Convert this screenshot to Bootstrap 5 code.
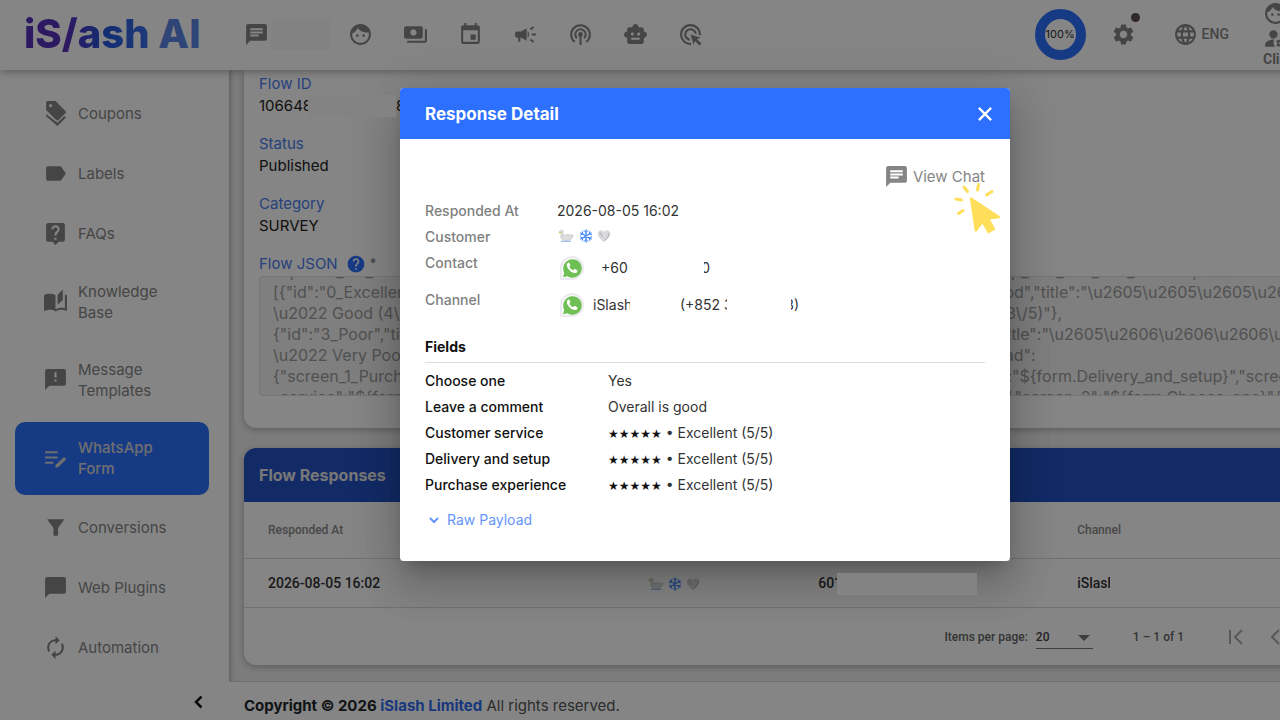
<!DOCTYPE html>
<html lang="en">
<head>
<meta charset="utf-8">
<meta name="viewport" content="width=device-width, initial-scale=1">
<title>iSlash AI - WhatsApp Form</title>
<link href="https://cdn.jsdelivr.net/npm/bootstrap@5.3.0/dist/css/bootstrap.min.css" rel="stylesheet">
<style>
  :root { --brand: #2d70ff; --icon: #858585; --page: #ededed; }
  html, body { height: 100%; }
  body { font-family: Inter, "Liberation Sans", sans-serif; font-size: 15px; line-height: 21px; color: #222; overflow: hidden; }
  svg { display: block; flex: none; }
  a { text-decoration: none; }
  .ico { width: 25px; height: 25px; fill: currentColor; }
  /* the workspace is wider than the window; the surplus is clipped */
  .shell { width: calc(100% + 130px); min-height: 100vh; position: relative; background: var(--page); overflow: hidden; }
  .topbar { height: 70px; background: #fff; color: var(--icon); box-shadow: 0 2px 8px rgba(0,0,0,.3); z-index: 2; padding: 0 0 2px 24px; }
  .logo { font: 800 40px/1 Inter, sans-serif; white-space: nowrap; width: 220px; }
  .logo .word { background: linear-gradient(90deg, #5630bd 0 35%, #2458dc 65%, #3d6fe8); -webkit-background-clip: text; background-clip: text; color: transparent; }
  .logo .ai { color: #5a84e4; }
  .topnav a { width: 55px; display: flex; justify-content: center; color: inherit; }
  .topnav a:first-child { width: 24px; }
  .patch { background: #fafafa; height: 31px; width: 60px; margin: 0 2px 0 3px; }
  .gauge { width: 51px; height: 51px; border-radius: 50%; border: 10px solid var(--brand); font-size: 11px; color: #333; }
  .gear { position: relative; margin: 0 37px 0 25px; }
  .gear .dot { position: absolute; width: 9px; height: 9px; border-radius: 50%; background: #5b4f4f; left: 20px; top: -9px; }
  .lang { font: 500 14px/16px Roboto, sans-serif; color: var(--icon); }
  .account { width: 147px; margin-left: 34px; }
  .account b { font-weight: 700; }
  .side { width: 229px; background: #fff; box-shadow: 1px 0 5px rgba(0,0,0,.3); padding: 16px 20px 8px 15px; }
  .side a { display: flex; align-items: center; min-height: 55px; margin-bottom: 5px; padding: 15px 28px; gap: 10px; color: var(--icon); border-radius: 10px; }
  .side a.two { min-height: 73px; padding: 14px 20px 16px 28px; }
  .side a.active { background: var(--brand); color: #d5d5d5; font-weight: 500; }
  .panel { background: #fff; box-shadow: 0 2px 6px rgba(0,0,0,.25); margin: 0 15px; }
  .info { border-radius: 0 0 12px 12px; padding: 3px 15px 32px; }
  .info .name { color: #4b7dee; }
  .info label.name { margin-bottom: 2px; }
  .info dl > div { height: 60px; }
  .info dt { line-height: 21px; margin: 0 0 1px; }
  .info dd { line-height: 21px; margin: 0; }
  .clip { display: inline-block; overflow: hidden; vertical-align: top; white-space: nowrap; }
  .clip.tail { display: inline-flex; justify-content: flex-end; }
  .mask { position: relative; z-index: 10; flex: none; height: 22px; background: #838383; }
  .json { background: #f3f3f3; border: 1px solid #e0e0e0; border-radius: 4px; color: #9c9c9c; height: 120px; font-size: 16px; line-height: 21px; padding: 0 13px; resize: none; overflow: hidden; white-space: pre; display: block; width: 100%; }
  .resp { border-radius: 12px; margin-top: 20px; overflow: hidden; }
  .resp h2 { background: #2453c6; color: #e4e4e4; font-size: 16px; line-height: 54px; padding-left: 15px; font-weight: 700; margin: 0; }
  .resp table { font-family: Roboto, sans-serif; table-layout: fixed; width: 100%; border-collapse: collapse; }
  .resp th { font-size: 12px; font-weight: 500; color: #8a8a8a; height: 56px; }
  .resp td { font-size: 14px; font-weight: 500; height: 49px; color: #333; }
  .resp th, .resp td { padding: 2px 0 0 24px; border-bottom: 1px solid #d8d8d8; }
  .pager { font: 500 12px/20px Roboto, sans-serif; color: #666; height: 57px; padding: 2px 19px 0 0; }
  .pager select { appearance: none; border: 0; border-bottom: 1px solid #777; background: transparent; font: 500 12px/22px Roboto, sans-serif; color: #444; width: 57px; padding: 0; }
  .pager .caret { position: absolute; right: 3px; top: 9px; border: 6px solid transparent; border-top-color: #777; border-bottom: 0; }
  .pager button { width: 40px; height: 40px; border: 0; background: none; padding: 0; color: #aaa; display: flex; align-items: center; justify-content: center; }
  .foot { background: #fff; border-top: 1px solid #d5d5d5; margin-top: 16px; padding: 13px 15px; color: #555; }
  .veil { position: absolute; inset: 0; background: rgba(0,0,0,.48); z-index: 9; }
  .overlay { position: absolute; z-index: 11; display: block; height: auto; overflow: visible; pointer-events: none; }
  .overlay .modal-dialog { max-width: 610px; margin: 88px auto 0; }
  .overlay .modal-content { border: 0; border-radius: 4px; font-size: 14px; line-height: 20px; color: #333; }
  .lift { position: absolute; z-index: 9; left: 0; right: 0; top: 88px; max-width: 610px; height: 473px; margin: 0 auto; box-shadow: 0 11px 15px -7px rgba(0,0,0,.2), 0 24px 38px 3px rgba(0,0,0,.14), 0 9px 46px 8px rgba(0,0,0,.12); }
  .overlay .modal-header { background: var(--brand); color: #fff; border: 0; height: 51px; padding: 1px 13px 0 25px; border-radius: 4px 4px 0 0; }
  .overlay h1 { font-size: 17px; font-weight: 700; margin: 0; }
  .overlay .modal-header button { border: 0; background: none; padding: 5px; color: #fff; }
  .overlay .modal-body { padding: 25px 25px 31px; }
  .chat { color: #858585; font-size: 15px; gap: 4px; }
  .click { position: absolute; left: 554px; top: 94px; }
  .meta { margin: 12px 0 0; }
  .meta dt { width: 132px; font-weight: 500; color: #808080; }
  .meta dt, .meta dd, .fields dt, .fields dd { margin: 0; }
  .meta > div { min-height: 26px; display: flex; }
  .meta > .tall { height: 37px; }
  .tall dd { display: flex; align-items: center; height: 30px; }
  .tall dd > svg { margin-left: 2px; }
  .overlay h3 { font-size: 14px; font-weight: 700; line-height: 20px; margin: 10px 0 5px; color: #111; }
  .fields { border-top: 1px solid #ddd; padding-top: 5px; margin: 0; }
  .fields > div { display: flex; height: 26px; align-items: center; }
  .fields dt { width: 183px; font-weight: 500; color: #111; }
  .fields .stars { font: 12px/20px "DejaVu Sans", sans-serif; color: #111; }
  .raw { border: 0; background: none; color: #6595fb; padding: 0 3px; margin-top: 12px; gap: 7px; }
</style>
</head>
<body>
<svg width="0" height="0" class="position-absolute" aria-hidden="true">
  <symbol id="chat" viewBox="0 0 24 24"><path d="M20 2H4c-1.1 0-1.99.9-1.99 2L2 22l4-4h14c1.1 0 2-.9 2-2V4c0-1.1-.9-2-2-2zM6 9h12v2H6V9zm8 5H6v-2h8v2zm4-6H6V6h12v2z"/></symbol>
  <symbol id="face" viewBox="0 0 24 24"><path d="M9 11.75c-.69 0-1.25.56-1.25 1.25s.56 1.25 1.25 1.25 1.25-.56 1.25-1.25-.56-1.25-1.25-1.25zm6 0c-.69 0-1.25.56-1.25 1.25s.56 1.25 1.25 1.25 1.25-.56 1.25-1.25-.56-1.25-1.25-1.25zM12 2C6.48 2 2 6.48 2 12s4.48 10 10 10 10-4.48 10-10S17.52 2 12 2zm0 18c-4.41 0-8-3.59-8-8 0-.29.02-.58.05-.86 2.36-1.05 4.23-2.98 5.21-5.37C11.07 8.33 14.05 10 17.42 10c.78 0 1.53-.09 2.25-.26.21.71.33 1.47.33 2.26 0 4.41-3.59 8-8 8z"/></symbol>
  <symbol id="snow" viewBox="0 0 14 14"><g fill="none" stroke="#4a8cf5" stroke-width="1.4" stroke-linecap="round"><path d="M7 1v12M1.8 4l10.4 6M12.2 4L1.8 10"/><path stroke-width="1" d="M5 1.6l2 2 2-2M5 12.4l2-2 2 2M1.3 6l2.6-.8-.6-2.7M12.7 6l-2.6-.8.6-2.7M1.3 8l2.6.8-.6 2.7M12.7 8l-2.6.8.6 2.7"/></g></symbol>
  <symbol id="swan" viewBox="0 0 16 14"><path d="M3.2 1.2c1.700 0 2.400 1.100 2 2.600L4.600 6.500c2 0 3.400-.9 5.200-.9 2 .1 3.700 1 5.200.2-.2 3.500-2.600 5.700-6.200 5.700-3.600 0-6.200-1.200-6-4.400.1-1.500.7-2.400.6-3.300L1.300 3.500C1.200 2.200 2 1.200 3.200 1.200z" fill="#dedede" stroke="#b9b9b9" stroke-width=".6"/><path d="M.4 4.300L2.400 2.700l.6 1.200z" fill="#e8b52f"/><path d="M3 12.300h10" stroke="#9fc3ee" stroke-width="1.400"/></symbol>
  <symbol id="heart" viewBox="0 0 14 14"><path d="M7 13C3 10 .8 7.600.8 4.700.8 2.700 2.200 1.300 4 1.300c1.300 0 2.400.7 3 1.800.6-1.100 1.700-1.800 3-1.800 1.800 0 3.200 1.400 3.200 3.400C13.200 7.600 11 10 7 13z" fill="#d9d9dc"/><path d="M7.500 11.500c3-2.400 5-4.600 4.700-7.500M3 3.500L5.500 8" stroke="#a9a9ae" fill="none" stroke-width=".9"/></symbol>
  <symbol id="wa" viewBox="0 0 28 28"><path d="M1 27V13A13 13 0 1 1 14 27z" fill="#ececf0"/><path d="M3.500 24.500V14A10.500 10.500 0 1 1 14 24.500z" fill="#fff"/><path d="M4.500 24l1-5.200A10 10 0 1 1 9 22.800z" fill="#6fc054"/><path d="M10.300 8c-.6 0-1.900.9-1.900 2.800 0 3.500 5 8.700 8.600 8.700 1.800 0 2.900-1 2.900-2.400 0-.4-.1-.6-.4-.8l-2.300-1.200c-.5-.2-.8-.1-1.100.3l-.8 1c-1.900-.7-3.300-2.100-4.100-3.800l.8-1c.3-.3.3-.6.2-.9l-1-2.200c-.2-.4-.5-.5-.9-.5z" fill="#fff"/></symbol>
</svg>

<div class="shell d-flex flex-column">
  <header class="topbar d-flex align-items-center flex-shrink-0">
    <a href="#" class="logo"><span class="word">iS/ash</span> <span class="ai">AI</span></a>
    <nav class="topnav d-flex align-items-center" aria-label="Tools">
      <a href="#" aria-label="Chat"><svg class="ico"><use href="#chat"/></svg></a>
      <span class="patch"></span>
      <a href="#" aria-label="Customers"><svg class="ico"><use href="#face"/></svg></a>
      <a href="#" aria-label="Payments"><svg class="ico" viewBox="0 0 24 24"><path d="M19 14V6c0-1.1-.9-2-2-2H3c-1.1 0-2 .9-2 2v8c0 1.1.9 2 2 2h14c1.1 0 2-.9 2-2zm-9-1c-1.66 0-3-1.340-3-3s1.340-3 3-3 3 1.340 3 3-1.340 3-3 3zm13-6v11c0 1.100-.9 2-2 2H4v-2h17V7h2z"/></svg></a>
      <a href="#" aria-label="Bookings"><svg class="ico" viewBox="0 0 24 24"><path d="M17 12h-5v5h5v-5zM16 1v2H8V1H6v2H5c-1.110 0-1.990.9-1.990 2L3 19c0 1.100.89 2 2 2h14c1.100 0 2-.9 2-2V5c0-1.100-.9-2-2-2h-1V1h-2zm3 18H5V8h14v11z"/></svg></a>
      <a href="#" aria-label="Campaigns"><svg class="ico" viewBox="0 0 24 24"><path d="M18 11v2h4v-2h-4zm-2 6.610c.96.71 2.210 1.650 3.200 2.390.4-.53.8-1.070 1.200-1.600-.99-.74-2.240-1.680-3.200-2.400-.4.54-.8 1.080-1.200 1.610zM20.400 5.600c-.4-.53-.8-1.070-1.200-1.600-.99.74-2.240 1.680-3.200 2.400.4.53.8 1.070 1.200 1.600.96-.72 2.210-1.650 3.200-2.400zM4 9c-1.100 0-2 .9-2 2v2c0 1.100.9 2 2 2h1v4h2v-4h1l5 3V6L8 9H4zm11.500 3c0-1.330-.58-2.530-1.500-3.350v6.690c.92-.81 1.500-2.010 1.500-3.340z"/></svg></a>
      <a href="#" aria-label="Broadcast"><svg class="ico" viewBox="0 0 24 24"><g fill="none" stroke="currentColor" stroke-width="2"><path d="M6.500 19.200A9 9 0 1 1 17.500 19.200M8.500 15.600A5 5 0 1 1 15.500 15.600"/><path d="M12 12v10"/></g><circle cx="12" cy="12" r="2.300"/></svg></a>
      <a href="#" aria-label="Bot"><svg class="ico" viewBox="0 0 24 24"><path d="M20 9V7c0-1.100-.9-2-2-2h-3c0-1.660-1.340-3-3-3S9 3.340 9 5H6c-1.100 0-2 .9-2 2v2c-1.660 0-3 1.340-3 3s1.340 3 3 3v4c0 1.100.9 2 2 2h12c1.100 0 2-.9 2-2v-4c1.660 0 3-1.340 3-3s-1.340-3-3-3zM7.500 11.500c0-.83.67-1.500 1.500-1.500s1.500.67 1.500 1.500S9.830 13 9 13s-1.500-.67-1.500-1.500zM16 17H8v-2h8v2zm-1-4c-.83 0-1.500-.67-1.500-1.500S14.170 10 15 10s1.500.67 1.500 1.500S15.830 13 15 13z"/></svg></a>
      <a href="#" aria-label="Ads"><svg class="ico" viewBox="0 0 24 24"><path d="M11.710 17.990C8.530 17.840 6 15.220 6 12c0-3.310 2.690-6 6-6 3.220 0 5.840 2.530 5.990 5.710l-2.100-.63C15.480 9.310 13.890 8 12 8c-2.210 0-4 1.790-4 4 0 1.890 1.310 3.480 3.080 3.890l.63 2.100zM22 12c0 .3-.01.6-.04.9l-1.970-.59c.01-.1.01-.21.01-.31 0-4.420-3.580-8-8-8s-8 3.580-8 8 3.580 8 8 8c.1 0 .21 0 .31-.01l.59 1.970c-.3.03-.6.04-.9.04-5.520 0-10-4.480-10-10S6.480 2 12 2s10 4.480 10 10zm-3.770 4.260L22 15l-10-3 3 10 1.260-3.770 4.270 4.270 1.980-1.980-4.280-4.260z"/></svg></a>
    </nav>
    <div class="ms-auto d-flex align-items-center">
      <div class="gauge d-flex align-items-center justify-content-center">100%</div>
      <a href="#" class="gear text-reset" aria-label="Settings"><svg class="ico" viewBox="0 0 24 24"><path d="M19.140 12.940c.04-.3.06-.61.06-.94 0-.32-.02-.64-.07-.94l2.030-1.580c.18-.14.23-.41.12-.61l-1.920-3.320c-.12-.22-.37-.29-.59-.22l-2.390.96c-.5-.38-1.030-.7-1.620-.94l-.36-2.540c-.04-.24-.24-.41-.48-.41h-3.840c-.24 0-.43.17-.47.41l-.36 2.540c-.59.24-1.130.57-1.620.94l-2.390-.96c-.22-.08-.47 0-.59.22L2.740 8.870c-.12.21-.08.47.12.61l2.030 1.580c-.05.3-.09.63-.09.94s.02.64.07.94l-2.030 1.580c-.18.14-.23.41-.12.61l1.920 3.320c.12.22.37.29.59.22l2.390-.96c.5.38 1.030.7 1.620.94l.36 2.540c.05.24.24.41.48.41h3.840c.24 0 .44-.17.47-.41l.36-2.540c.59-.24 1.130-.56 1.620-.94l2.390.96c.22.08.47 0 .59-.22l1.920-3.320c.12-.22.07-.47-.12-.61l-2.010-1.580zM12 15.600c-1.980 0-3.600-1.620-3.600-3.600s1.620-3.600 3.600-3.600 3.600 1.620 3.600 3.600-1.620 3.600-3.600 3.600z"/></svg><span class="dot"></span></a>
      <a href="#" class="lang d-flex align-items-center gap-1"><svg class="ico" viewBox="0 0 24 24"><path d="M11.990 2C6.470 2 2 6.480 2 12s4.470 10 9.990 10C17.520 22 22 17.520 22 12S17.520 2 11.990 2zm6.930 6h-2.950c-.32-1.250-.78-2.450-1.380-3.560 1.840.63 3.370 1.910 4.330 3.560zM12 4.040c.83 1.200 1.480 2.530 1.910 3.960h-3.820c.43-1.430 1.080-2.760 1.910-3.960zM4.260 14C4.100 13.360 4 12.690 4 12s.1-1.360.26-2h3.380c-.08.66-.14 1.320-.14 2 0 .68.06 1.340.14 2H4.260zm.82 2h2.950c.32 1.250.78 2.450 1.380 3.560-1.840-.63-3.370-1.900-4.330-3.560zm2.950-8H5.080c.96-1.660 2.490-2.930 4.330-3.560C8.810 5.550 8.350 6.750 8.030 8zM12 19.960c-.83-1.200-1.480-2.530-1.910-3.960h3.820c-.43 1.430-1.080 2.760-1.910 3.960zM14.340 14H9.660c-.09-.66-.16-1.320-.16-2 0-.68.07-1.350.16-2h4.680c.09.65.16 1.320.16 2 0 .68-.07 1.340-.16 2zm.25 5.560c.6-1.110 1.060-2.310 1.380-3.560h2.950c-.96 1.650-2.490 2.930-4.330 3.560zM16.360 14c.08-.66.14-1.320.14-2 0-.68-.06-1.340-.14-2h3.380c.16.64.26 1.310.26 2s-.1 1.360-.26 2h-3.380z"/></svg>ENG</a>
      <a href="#" class="lang account"><svg class="ico" aria-hidden="true"><use href="#face"/></svg><svg class="ico" viewBox="0 0 24 24"><circle cx="10" cy="8" r="4"/><path d="M10.670 13.020C7.400 12.800 2 14.300 2 18v2h9.500a7 7 0 0 1-.83-6.980z"/><path d="M20.750 16l1.140-1-.94-1.700-1.460.5-.9-.5-.3-1.500h-1.900l-.3 1.500-.9.500-1.460-.5-.94 1.700 1.140 1v1l-1.140 1 .94 1.700 1.460-.5.900.5.300 1.500h1.900l.3-1.500.9-.5 1.460.5.94-1.700-1.140-1zm-3.400 2.300a1.800 1.800 0 1 1 0-3.600 1.800 1.800 0 0 1 0 3.600z"/></svg><b>Client</b></a>
    </div>
  </header>

  <div class="d-flex flex-grow-1">
    <aside class="side d-flex flex-column flex-shrink-0">
      <a href="#"><svg class="ico" viewBox="0 0 24 24"><path fill-rule="evenodd" d="M4.500 0H12l9.500 9.500c.7.7.7 1.500 0 2.200l-6.600 6.600c-.7.7-1.500.7-2.200 0L3 8.700V1.500C3 .7 3.700 0 4.500 0zM7.300 2.900a1.500 1.500 0 1 0 0 3 1.500 1.500 0 0 0 0-3z"/><path d="M3 12.400V14.600L13.800 24l8.200-8.200-1.500-1.500-6.700 6.600z"/></svg>Coupons</a>
      <a href="#"><svg class="ico" viewBox="0 0 24 24"><path d="M17.630 5.840C17.270 5.330 16.670 5 16 5L5 5.010C3.900 5.010 3 5.900 3 7v10c0 1.100.9 1.990 2 1.990L16 19c.67 0 1.270-.33 1.630-.84L22 12l-4.370-6.160z"/></svg>Labels</a>
      <a href="#"><svg class="ico" viewBox="0 0 24 24"><path d="M19 2H5c-1.110 0-2 .9-2 2v14c0 1.100.89 2 2 2h4l3 3 3-3h4c1.100 0 2-.9 2-2V4c0-1.100-.9-2-2-2zm-6 16h-2v-2h2v2zm2.070-7.750l-.9.920C13.450 11.900 13 12.500 13 14h-2v-.5c0-1.100.45-2.100 1.170-2.830l1.240-1.260c.37-.36.59-.86.59-1.410 0-1.100-.9-2-2-2s-2 .9-2 2H8c0-2.210 1.790-4 4-4s4 1.790 4 4c0 .88-.36 1.680-.93 2.250z"/></svg>FAQs</a>
      <a href="#" class="two"><svg class="ico" viewBox="0 0 24 24"><path d="M19 .5l-5 5V15l5-4.500v-10zM1 6v14.650c0 .25.25.5.5.5.100 0 .15-.05.25-.05C3.100 20.450 5.050 20 6.500 20c1.950 0 4.050.4 5.500 1.500V6c-1.450-1.100-3.550-1.500-5.500-1.500S2.450 4.900 1 6zm22 13.500V6c-.6-.45-1.250-.75-2-1v13.500c-1.100-.35-2.300-.5-3.500-.5-1.700 0-4.150.65-5.500 1.500v2c1.350-.85 3.800-1.500 5.500-1.500 1.650 0 3.350.3 4.750 1.050.1.050.15.050.25.050.25 0 .5-.25.5-.5v-1.100z"/></svg>Knowledge Base</a>
      <a href="#" class="two"><svg class="ico" viewBox="0 0 24 24"><path d="M20 2H4c-1.100 0-1.990.9-1.990 2L2 22l4-4h14c1.100 0 2-.9 2-2V4c0-1.100-.9-2-2-2zm-7 12h-2v-2h2v2zm0-4h-2V5h2v5z"/></svg>Message Templates</a>
      <a href="#" class="two active" aria-current="page"><svg class="ico" viewBox="0 0 24 24"><path d="M2 11h12v2H2v-2zm0-5v2h12V6H2zm0 12h8v-2H2v2zm18.200-6.400 2.100 2.100-8 7.800H12v-2.200z"/></svg>WhatsApp Form</a>
      <a href="#"><svg class="ico" viewBox="0 0 24 24"><path d="M4 4h16.500L14.500 12.500V19c0 .7-.5 1-1 1h-2.500c-.6 0-1-.4-1-1v-6.500z"/></svg>Conversions</a>
      <a href="#"><svg class="ico" viewBox="0 0 24 24"><path d="M20 2H4c-1.100 0-2 .9-2 2v18l4-4h14c1.100 0 2-.9 2-2V4c0-1.100-.9-2-2-2z"/></svg>Web Plugins</a>
      <a href="#"><svg class="ico" viewBox="0 0 24 24"><path d="M12 6v3l4-4-4-4v3c-4.420 0-8 3.580-8 8 0 1.570.46 3.030 1.240 4.260L6.700 14.800c-.45-.83-.7-1.790-.7-2.800 0-3.310 2.690-6 6-6zm6.760 1.740L17.300 9.200c.44.84.7 1.790.7 2.800 0 3.310-2.690 6-6 6v-3l-4 4 4 4v-3c4.420 0 8-3.580 8-8 0-1.570-.46-3.030-1.240-4.260z"/></svg>Automation</a>
      <button type="button" class="btn p-0 border-0 mt-3 ms-auto lh-1" aria-label="Collapse menu"><svg width="20" height="20" viewBox="0 0 20 20" fill="none" stroke="#111" stroke-width="2.500"><path d="M12.500 0.500L7 6l5.500 5.500"/></svg></button>
    </aside>

    <div class="flex-grow-1 d-flex flex-column" style="min-width:0">
      <main>
        <section class="panel info">
          <dl class="m-0">
            <div><dt class="name fw-normal">Flow ID</dt><dd class="d-flex"><span class="clip" style="width:49px">106648</span><span class="mask" style="width:88px"></span><span>8</span></dd></div>
            <div><dt class="name fw-normal">Status</dt><dd>Published</dd></div>
            <div><dt class="name fw-normal">Category</dt><dd>SURVEY</dd></div>
          </dl>
          <label for="json" class="name d-flex align-items-center"><span>Flow JSON</span>
            <svg class="ms-2" width="20" height="20" viewBox="0 0 24 24" fill="#2d70ff"><path d="M12 2C6.480 2 2 6.480 2 12s4.480 10 10 10 10-4.480 10-10S17.520 2 12 2zm1 17h-2v-2h2v2zm2.070-7.750l-.9.920C13.450 12.900 13 13.500 13 15h-2v-.5c0-1.100.45-2.100 1.170-2.830l1.240-1.260c.37-.36.59-.86.59-1.410 0-1.100-.9-2-2-2s-2 .9-2 2H8c0-2.210 1.790-4 4-4s4 1.790 4 4c0 .88-.36 1.680-.93 2.250z"/></svg>
            <small class="ms-1 text-secondary">*</small></label>
          <textarea id="json" class="json" disabled>"options_list_screen_1_Purchase_experience_data_source_entries_for_rating_question_in_form_step_one_title_text_entries","data-source":
[{"id":"0_Excellent","title":"\u2605\u2605\u2605\u2605\u2605 \u2022 Perfect 5\/5"},{"id":"1_Good","title":"\u2605\u2605\u2605\u2605\u2606
\u2022 Good (4\/5)"},{"id":"2_Average","title":"\u2605\u2605\u2605\u2606\u2606 \u2022 Fair (3\/5)"},
{"id":"3_Poor","title":"\u2605\u2605\u2606\u2606\u2606 \u2022 Poor (2\/5)"},{"id":"4_Worst","title":"\u2605\u2606\u2606\u2606\u2606
\u2022 Very Poor (1\/5)"}]},{"type":"Footer","label":"Done","on-click-action":{"name":"ok","payload":
{"screen_1_Purchase_experience":"${form.Purchase_experience}","screen_1_Delivery_and_setup":"${form.Delivery_and_setup}","screen_1_Customer
_service":"${form.Customer_service}","screen_1_Leave_a_comment":"${form.Leave_a_comment}","screen_2":"${form.Choose_one}","screen_3":""}}</textarea>
        </section>

        <section class="panel resp">
          <h2>Flow Responses</h2>
          <table>
            <colgroup><col style="width:33%"><col style="width:14.8%"><col style="width:22.5%"><col></colgroup>
            <thead><tr><th>Responded At</th><th>Customer</th><th>Contact</th><th>Channel</th></tr></thead>
            <tbody><tr>
              <td>2026-08-05 16:02</td>
              <td><span class="d-flex gap-1"><svg width="16" height="14"><use href="#swan"/></svg><svg width="14" height="14"><use href="#snow"/></svg><svg width="14" height="14"><use href="#heart"/></svg></span></td>
              <td><span class="d-flex align-items-center"><span class="clip" style="width:19px">601</span><span class="mask" style="width:140px"></span></span></td>
              <td><span class="clip" style="width:33px">iSlash</span></td>
            </tr></tbody>
          </table>
          <div class="pager d-flex align-items-center justify-content-end">
            <label for="size" class="me-2">Items per page:</label>
            <div class="position-relative"><select id="size"><option>20</option></select><span class="caret"></span></div>
            <span class="ms-4 ps-3 me-4 pe-2">1 – 1 of 1</span>
            <button type="button" aria-label="First page"><svg width="24" height="24" viewBox="0 0 24 24" fill="none" stroke="currentColor" stroke-width="2"><path d="M6 5v14M18 5l-7 7 7 7"/></svg></button>
            <button type="button" aria-label="Previous page"><svg width="24" height="24" viewBox="0 0 24 24" fill="none" stroke="currentColor" stroke-width="2"><path d="M15 5l-7 7 7 7"/></svg></button>
            <button type="button" aria-label="Next page"><svg width="24" height="24" viewBox="0 0 24 24" fill="none" stroke="currentColor" stroke-width="2"><path d="M9 5l7 7-7 7"/></svg></button>
            <button type="button" aria-label="Last page"><svg width="24" height="24" viewBox="0 0 24 24" fill="none" stroke="currentColor" stroke-width="2"><path d="M18 5v14M6 5l7 7-7 7"/></svg></button>
          </div>
        </section>
      </main>
      <footer class="foot flex-grow-1"><b class="text-dark">Copyright © 2026 </b><a href="#" class="fw-bold" style="color:#2f6cf0">iSlash Limited</a> All rights reserved.</footer>
    </div>
  </div>

  <div class="veil"></div>
  <div class="lift"></div>
  <div class="modal overlay" role="dialog" aria-labelledby="dlg">
    <div class="modal-dialog">
      <div class="modal-content">
        <div class="modal-header">
          <h1 id="dlg">Response Detail</h1>
          <button type="button" aria-label="Close"><svg width="14" height="14" viewBox="0 0 16 16" stroke="currentColor" stroke-width="2.600"><path d="M1 1l14 14M15 1L1 15"/></svg></button>
        </div>
        <div class="modal-body">
          <div class="d-flex justify-content-end">
            <a href="#" class="chat d-flex align-items-center"><svg class="ico"><use href="#chat"/></svg>View Chat</a>
          </div>
          <dl class="meta">
            <div><dt>Responded At</dt><dd>2026-08-05 16:02</dd></div>
            <div><dt>Customer</dt><dd class="d-flex align-items-center pb-2"><svg width="18" height="14"><use href="#swan"/></svg><svg class="mx-1" width="14" height="14"><use href="#snow"/></svg><svg width="14" height="14"><use href="#heart"/></svg></dd></div>
            <div class="tall"><dt>Contact</dt><dd><svg width="26" height="26"><use href="#wa"/></svg><span class="ms-3" style="width:103px">+60</span><span class="clip tail" style="width:6px">0</span></dd></div>
            <div class="tall"><dt>Channel</dt><dd><svg width="26" height="26"><use href="#wa"/></svg><span class="ms-2" style="width:87px"><span class="clip" style="width:37px">iSlash</span></span><span class="clip" style="width:47px">(+852 3</span><span class="ps-5 ms-3"><span class="clip tail" style="width:8px">3)</span></span></dd></div>
          </dl>
          <h3>Fields</h3>
          <dl class="fields">
            <div><dt>Choose one</dt><dd>Yes</dd></div>
            <div><dt>Leave a comment</dt><dd>Overall is good</dd></div>
            <div><dt>Customer service</dt><dd><span class="stars">★★★★★</span> • Excellent (5/5)</dd></div>
            <div><dt>Delivery and setup</dt><dd><span class="stars">★★★★★</span> • Excellent (5/5)</dd></div>
            <div><dt>Purchase experience</dt><dd><span class="stars">★★★★★</span> • Excellent (5/5)</dd></div>
          </dl>
          <button type="button" class="raw d-flex align-items-center"><svg width="12" height="12" viewBox="0 0 12 12" fill="none" stroke="currentColor" stroke-width="2"><path d="M2 4l4 4 4-4"/></svg>Raw Payload</button>
        </div>
        <svg class="click" width="48" height="54" viewBox="0 0 48 54" aria-hidden="true"><path d="M17.500 15.500L45.500 34c1 .7.700 2-.5 2.200L36 37.500l5.500 10-7.500 4-5.500-9.700-5.800 7.400c-.7.900-2 .5-2.100-.7L16 17c0-1.400.6-2 1.500-1.500z" fill="#ffdf5a"/><path d="M23.500 8l1-5.500M32.500 13l5.500-3.500M13.500 9.500L10 5M7.500 18L2 17M9 28.500L4.500 31.500" stroke="#ffdf5a" stroke-width="3" stroke-linecap="round"/></svg>
      </div>
    </div>
  </div>
</div>
<script src="https://cdn.jsdelivr.net/npm/bootstrap@5.3.0/dist/js/bootstrap.bundle.min.js"></script>
<script>
  // open the JSON view part-way through its first line
  document.getElementById('json').scrollTop = 16;
</script>
</body>
</html>
